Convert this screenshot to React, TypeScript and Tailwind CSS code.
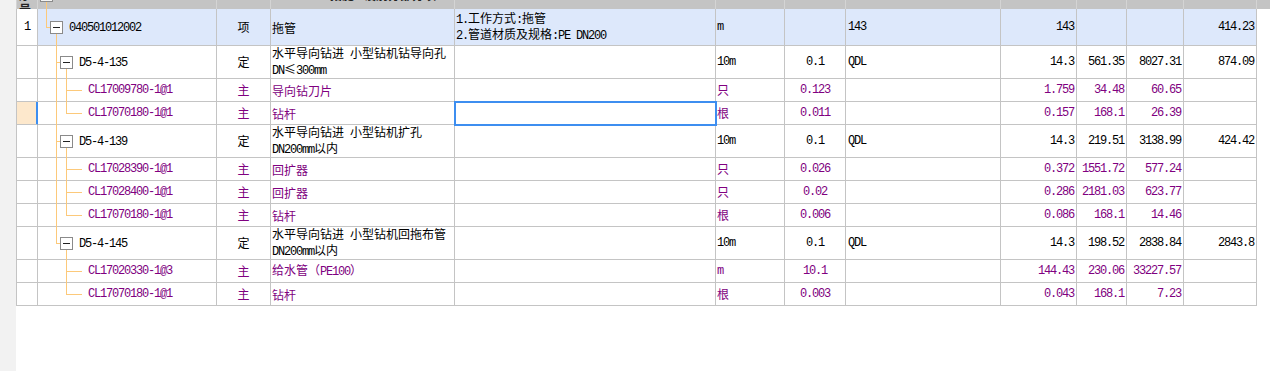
import React from 'react'

const COLS = 'grid-cols-[21px_179px_54px_184px_261px_69px_61px_155px_76px_50px_57px_73px]'
const HEAD_COLS = 'grid-cols-[21px_179px_54px_184px_261px_69px_61px_155px_76px_50px_57px_73px_1fr]'
const LINE = 'absolute bg-[#fcc97a]'

type Row = {
  lvl: 0 | 1 | 2
  num?: string
  code: string
  type: string
  name: string[]
  feat?: string[]
  unit: string
  qty: string
  expr?: string
  v: string[]
  h: string
  last?: boolean
  under?: boolean
  mat?: boolean
  sel?: boolean
}

const ROWS: Row[] = [
  { lvl: 0, num: '1', code: '040501012002', type: '项', name: ['拖管'], feat: ['1.工作方式:拖管', '2.管道材质及规格:PE DN200'], unit: 'm', qty: '', expr: '143', v: ['143', '', '', '414.23'], h: 'h-[37px]' },
  { lvl: 1, code: 'D5-4-135', type: '定', name: ['水平导向钻进 小型钻机钻导向孔', 'DN≤300mm'], unit: '10m', qty: '0.1', expr: 'QDL', v: ['14.3', '561.35', '8027.31', '874.09'], h: 'h-[33px]' },
  { lvl: 2, mat: true, code: 'CL17009780-1@1', type: '主', name: ['导向钻刀片'], unit: '只', qty: '0.123', v: ['1.759', '34.48', '60.65', ''], h: 'h-[23px]' },
  { lvl: 2, mat: true, last: true, sel: true, code: 'CL17070180-1@1', type: '主', name: ['钻杆'], unit: '根', qty: '0.011', v: ['0.157', '168.1', '26.39', ''], h: 'h-[23px]' },
  { lvl: 1, code: 'D5-4-139', type: '定', name: ['水平导向钻进 小型钻机扩孔', 'DN200mm以内'], unit: '10m', qty: '0.1', expr: 'QDL', v: ['14.3', '219.51', '3138.99', '424.42'], h: 'h-[33px]' },
  { lvl: 2, mat: true, code: 'CL17028390-1@1', type: '主', name: ['回扩器'], unit: '只', qty: '0.026', v: ['0.372', '1551.72', '577.24', ''], h: 'h-[23px]' },
  { lvl: 2, mat: true, code: 'CL17028400-1@1', type: '主', name: ['回扩器'], unit: '只', qty: '0.02', v: ['0.286', '2181.03', '623.77', ''], h: 'h-[23px]' },
  { lvl: 2, mat: true, last: true, code: 'CL17070180-1@1', type: '主', name: ['钻杆'], unit: '根', qty: '0.006', v: ['0.086', '168.1', '14.46', ''], h: 'h-[23px]' },
  { lvl: 1, last: true, code: 'D5-4-145', type: '定', name: ['水平导向钻进 小型钻机回拖布管', 'DN200mm以内'], unit: '10m', qty: '0.1', expr: 'QDL', v: ['14.3', '198.52', '2838.84', '2843.8'], h: 'h-[33px]' },
  { lvl: 2, mat: true, under: true, code: 'CL17020330-1@3', type: '主', name: ['给水管（PE100）'], unit: 'm', qty: '10.1', v: ['144.43', '230.06', '33227.57', ''], h: 'h-[23px]' },
  { lvl: 2, mat: true, under: true, last: true, code: 'CL17070180-1@1', type: '主', name: ['钻杆'], unit: '根', qty: '0.003', v: ['0.043', '168.1', '7.23', ''], h: 'h-[23px]' },
]

// ascii runs get the narrow mono face, the rest stays CJK
function Mix({ s }: { s: string }) {
  const parts = s.split(/([\x20-\x7E]+)/).filter(Boolean)
  return (
    <>
      {parts.map((p, i) =>
        /^[\x20-\x7E]+$/.test(p) ? (
          <span key={i} className="font-['Liberation_Mono'] tracking-[-1.2px] whitespace-pre">{p}</span>
        ) : (
          <span key={i}>{p}</span>
        )
      )}
    </>
  )
}

function Lines({ lines }: { lines: string[] }) {
  return (
    <div className="flex flex-col leading-[13px]">
      {lines.map((l, i) => (
        <div key={i}><Mix s={l} /></div>
      ))}
    </div>
  )
}

function Box() {
  return (
    <div className="relative z-10 w-[13px] h-[13px] shrink-0 border border-[#8a8a8a] bg-white flex items-center justify-center">
      <div className="w-[7px] h-px bg-[#222]" />
    </div>
  )
}

function TreeCell({ r, bg }: { r: Row; bg: string }) {
  const base = `relative border-r border-b border-[#c4c4c4] flex items-center whitespace-nowrap ${bg}`
  if (r.lvl === 0) {
    return (
      <div className={`${base} pl-[12px]`}>
        <div className={`${LINE} left-[8px] top-0 h-1/2 w-px`} />
        <div className={`${LINE} left-[8px] top-1/2 w-[4px] h-px`} />
        <div className={`${LINE} left-[18px] top-1/2 -bottom-px w-px`} />
        <Box />
        <span className="ml-[6px]"><Mix s={r.code} /></span>
      </div>
    )
  }
  if (r.lvl === 1) {
    return (
      <div className={`${base} pl-[22px]`}>
        <div className={`${LINE} left-[18px] top-0 w-px ${r.last ? 'h-1/2' : '-bottom-px'}`} />
        <div className={`${LINE} left-[18px] top-1/2 w-[4px] h-px`} />
        <div className={`${LINE} left-[28px] top-1/2 -bottom-px w-px`} />
        <Box />
        <span className="ml-[6px]"><Mix s={r.code} /></span>
      </div>
    )
  }
  return (
    <div className={`${base} pl-[50px] text-[#800080]`}>
      {!r.under && <div className={`${LINE} left-[18px] top-0 -bottom-px w-px`} />}
      <div className={`${LINE} left-[28px] top-0 w-px ${r.last ? 'h-1/2' : '-bottom-px'}`} />
      <div className={`${LINE} left-[28px] top-1/2 w-[16px] h-px`} />
      <Mix s={r.code} />
    </div>
  )
}

function TableRow({ r }: { r: Row }) {
  const cell = 'border-r border-b border-[#c4c4c4] flex items-center overflow-hidden whitespace-nowrap'
  const bg = r.lvl === 0 ? 'bg-[#dde8fb]' : ''
  const color = r.mat ? 'text-[#800080]' : 'text-black'
  return (
    <div className={`grid ${COLS} ${r.h} ${color}`}>
      <div className={`${cell} justify-center text-black ${r.sel ? 'bg-[#fde8cc] border-r-[#3d8ef0] shadow-[inset_-1px_0_0_#3d8ef0]' : ''}`}>
        {r.num && <Mix s={r.num} />}
      </div>
      <TreeCell r={r} bg={bg} />
      <div className={`${cell} ${bg} justify-center`}>{r.type}</div>
      <div className={`${cell} ${bg} pl-[1px]`}><Lines lines={r.name} /></div>
      <div className={`${cell} ${bg} pl-[1px] ${r.sel ? 'relative z-20 overflow-visible outline-2 outline-[#3d8ef0] -outline-offset-1' : ''}`}>
        {r.feat && <Lines lines={r.feat} />}
      </div>
      <div className={`${cell} ${bg} pl-[1px]`}><Mix s={r.unit} /></div>
      <div className={`${cell} ${bg} justify-center`}><Mix s={r.qty} /></div>
      <div className={`${cell} ${bg} pl-[2px]`}>{r.expr && <Mix s={r.expr} />}</div>
      {r.v.map((x, i) => (
        <div key={i} className={`${cell} ${bg} justify-end pr-[2px]`}><Mix s={x} /></div>
      ))}
    </div>
  )
}

export default function App() {
  const head = 'border-r border-[#d4d4d4] overflow-hidden relative'
  return (
    <div className="w-[1270px] h-[371px] flex overflow-hidden bg-white font-['Noto_Sans_CJK_SC',sans-serif] text-[12px] text-black">
      {/* left gutter */}
      <div className="w-[16px] shrink-0 bg-[#f2f2f2]" />

      <div className="flex-1 flex flex-col">
        {/* scrolled-off header */}
        <div className={`grid ${HEAD_COLS} h-[9px] bg-[#c4c4c4] border-l border-[#d4d4d4]`}>
          <div className={head}>
            <span className="absolute left-[2px] -top-[12px] font-bold leading-[14px] text-[#222]">序号</span>
          </div>
          <div className={head}>
            <div className="absolute left-[2px] -top-[11px] w-[13px] h-[13px] border border-[#8a8a8a] bg-[#f4f4f4]" />
            <div className={`${LINE} left-[8px] top-[2px] bottom-0 w-px`} />
          </div>
          <div className={head} />
          <div className={head}>
            <span className="absolute left-[59px] -top-[12px] font-bold leading-[14px] text-[#222]">措施 - 设别分部分项</span>
          </div>
          <div className={head} />
          <div className={head} />
          <div className={head} />
          <div className={head} />
          <div className={head} />
          <div className={head} />
          <div className={head} />
          <div className={head} />
          <div />
        </div>

        {/* rows */}
        <div className="flex flex-col w-[1241px] border-l border-[#c4c4c4]">
          {ROWS.map((r, i) => (
            <TableRow key={i} r={r} />
          ))}
        </div>
      </div>
    </div>
  )
}
